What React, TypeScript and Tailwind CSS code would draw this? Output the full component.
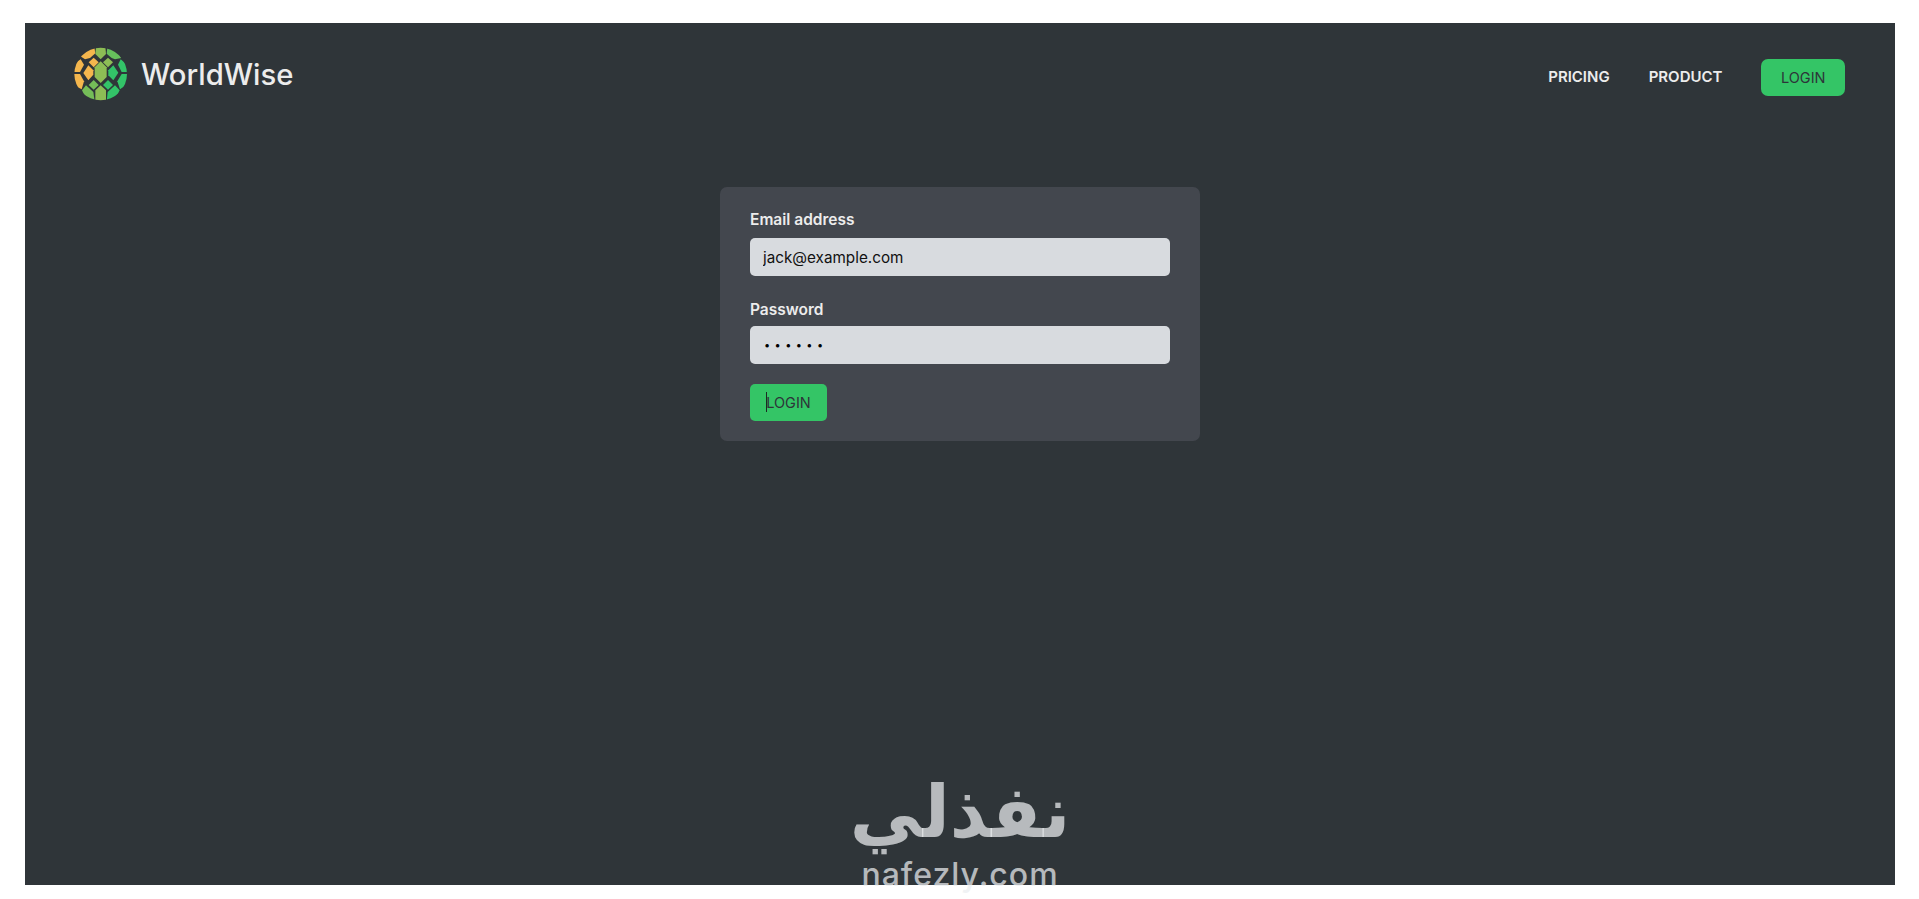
import React from 'react';

const Logo = () => (
  <svg width="54" height="54" viewBox="42 35 162 162" aria-label="WorldWise logo">
    <defs>
      <clipPath id="globe">
        <circle cx="122" cy="116" r="79" />
      </clipPath>
    </defs>
    <g clipPath="url(#globe)">
      {/* top row */}
      <polygon fill="#f4b64d" points="103,36 106,54 90,68 75,72 60,62 80,40" />
      <polygon fill="#8dbd55" points="108,34 136,34 138,56 122,72 106,56" />
      <polygon fill="#66c05c" points="142,36 170,46 184,68 165,72 155,68 140,55" />
      {/* upper diamonds */}
      <polygon fill="#f4b64d" points="101,67 116,81 101,96 86,81" />
      <polygon fill="#8dbd55" points="144,67 159,81 144,96 129,81" />
      {/* middle row */}
      <polygon fill="#f4b64d" points="62,72 72,88 60,110 40,110 42,85" />
      <polygon fill="#f4b64d" points="85,90 100,105 100,118 85,135 70,113" />
      <polygon fill="#8dbd55" points="122,78 140,96 140,125 122,143 104,125 104,96" />
      <polygon fill="#33c368" points="160,90 175,112 160,135 145,120 145,105" />
      <polygon fill="#33c368" points="182,72 204,90 204,110 185,110 174,88" />
      {/* lower diamonds */}
      <polygon fill="#74bd58" points="101,134 116,149 101,163 86,149" />
      <polygon fill="#33c368" points="144,134 159,149 144,163 129,149" />
      {/* bottom row */}
      <polygon fill="#f4b64d" points="40,116 60,116 72,138 65,162 42,150" />
      <polygon fill="#74bd58" points="78,150 100,170 104,198 82,198 66,165" />
      <polygon fill="#8dbd55" points="122,150 138,165 138,198 106,198 106,165" />
      <polygon fill="#33c368" points="165,150 179,165 162,198 140,198 143,170" />
      <polygon fill="#33c368" points="204,116 185,116 172,138 180,162 204,145" />
    </g>
  </svg>
);

export default function App() {
  return (
    <div className="relative h-[899px] overflow-hidden bg-white pt-[23px] pl-[25px] pr-6 font-['Inter',sans-serif]">
      <main className="h-[862px] bg-[#2f3539] pt-6 pl-[49px] pr-[50px]">
        <nav className="flex items-center justify-between">
          <a className="flex items-center gap-[13px]">
            <Logo />
            <span className="pt-px text-[29.25px] font-medium text-[#ececec]">WorldWise</span>
          </a>
          <ul className="mt-[6px] flex items-center gap-[39px] text-[15px] font-semibold text-[#ececec]">
            <li>PRICING</li>
            <li>PRODUCT</li>
            <li>
              <a className="block h-[37px] rounded-[7px] bg-[#34c566] px-[19.5px] text-[14.5px] leading-[38px] font-normal text-[#2d3439]">LOGIN</a>
            </li>
          </ul>
        </nav>

        <form className="mt-[86px] ml-[646px] flex w-[480px] flex-col rounded-[7px] bg-[#43474e] px-[30px] pt-[23px] pb-5">
          <label className="mb-[8px] text-[15.5px] leading-5 font-semibold text-[#ececec]">Email address</label>
          <input
            type="email"
            readOnly
            value="jack@example.com"
            className="h-[38px] rounded-[5px] bg-[#d8dbdf] pl-[13px] text-[15.25px] text-[#111]"
          />
          <label className="mt-[24px] mb-[6px] text-[15.5px] leading-5 font-semibold text-[#ececec]">Password</label>
          <input
            type="password"
            readOnly
            value="qwerty"
            className="h-[38px] rounded-[5px] bg-[#d8dbdf] pl-[14px] text-[11px] tracking-[4.4px] text-black"
          />
          <button
            type="button"
            className="relative mt-5 h-[37px] w-[77px] rounded-[5px] bg-[#34c566] text-[14.5px] font-normal text-[#2d3439]"
          >
            LOGIN
            <span className="absolute top-2 left-4 h-5 w-px bg-[#1c2a24]" />
          </button>
        </form>
      </main>

      <div className="absolute top-[770px] left-[855px] flex w-[210px] flex-col items-center text-[rgba(235,238,240,0.72)]">
        <span dir="rtl" className="font-['DejaVu_Sans',sans-serif] text-[72px] leading-[84px] font-bold">نفذلي</span>
        <span className="mt-[-2px] font-['Inter',sans-serif] text-[32px] leading-[46px] font-medium tracking-[1px]">nafezly.com</span>
      </div>
    </div>
  );
}
